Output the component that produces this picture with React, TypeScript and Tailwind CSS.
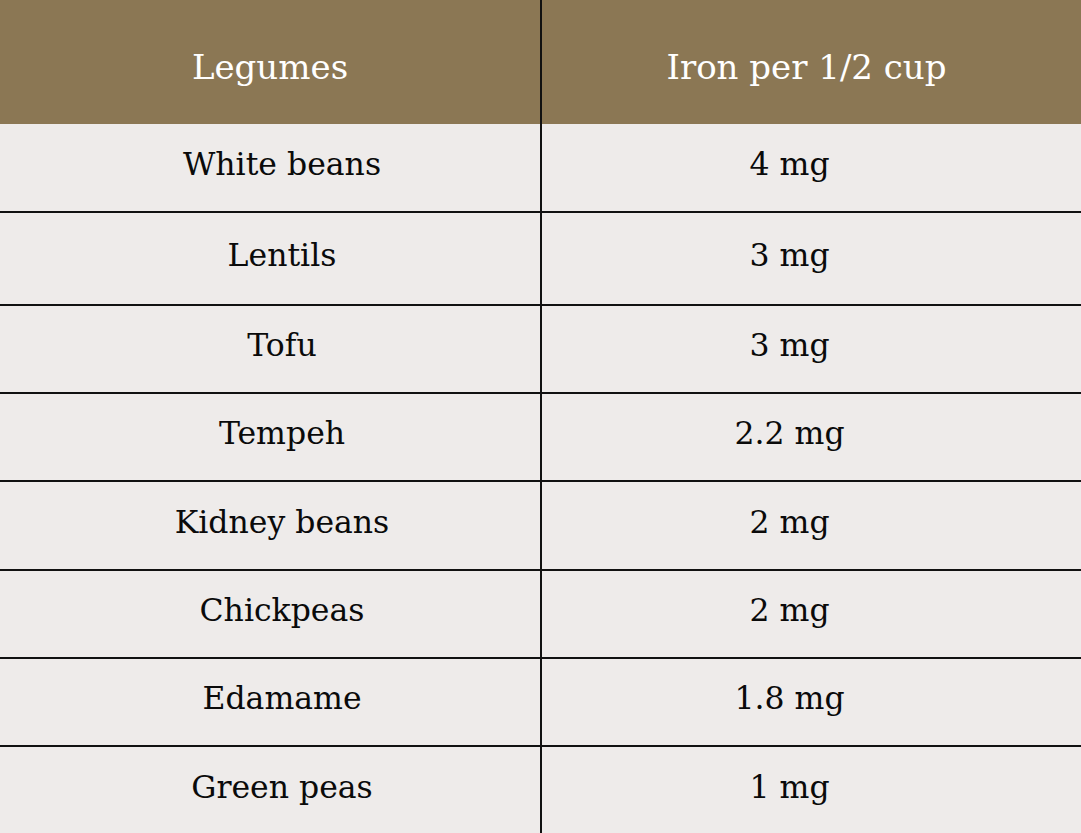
const rows = [
  { name: "White beans", iron: "4 mg", h: "h-[89px]" },
  { name: "Lentils", iron: "3 mg", h: "h-[93px]" },
  { name: "Tofu", iron: "3 mg", h: "h-[88px]" },
  { name: "Tempeh", iron: "2.2 mg", h: "h-[88px]" },
  { name: "Kidney beans", iron: "2 mg", h: "h-[89px]" },
  { name: "Chickpeas", iron: "2 mg", h: "h-[88px]" },
  { name: "Edamame", iron: "1.8 mg", h: "h-[88px]" },
  { name: "Green peas", iron: "1 mg", h: "h-[88px]" },
];

const App = () => {
  return (
    <div className="w-[1081px] h-[833px] overflow-hidden bg-[#eeebea] font-['DejaVu_Serif',serif]">
      <div className="grid grid-cols-[540px_2px_1fr] h-[124px] bg-[#8b7754] text-white text-[34px]">
        <div className="flex items-center justify-center pt-[10px]">Legumes</div>
        <div className="bg-[#111]" />
        <div className="flex items-center justify-center pr-[10px] pt-[10px]">Iron per 1/2 cup</div>
      </div>
      {rows.map((row, i) => (
        <div
          key={i}
          className={`grid grid-cols-[540px_2px_1fr] ${row.h} text-[31.5px] text-[#0a0a0a] ${i < rows.length - 1 ? "border-b-2 border-[#111]" : ""}`}
        >
          <div className="flex items-center justify-center pl-[24px] pb-[6px]">{row.name}</div>
          <div className="bg-[#111]" />
          <div className="flex items-center justify-center pr-[44px] pb-[6px]">{row.iron}</div>
        </div>
      ))}
    </div>
  );
};

export default App;
